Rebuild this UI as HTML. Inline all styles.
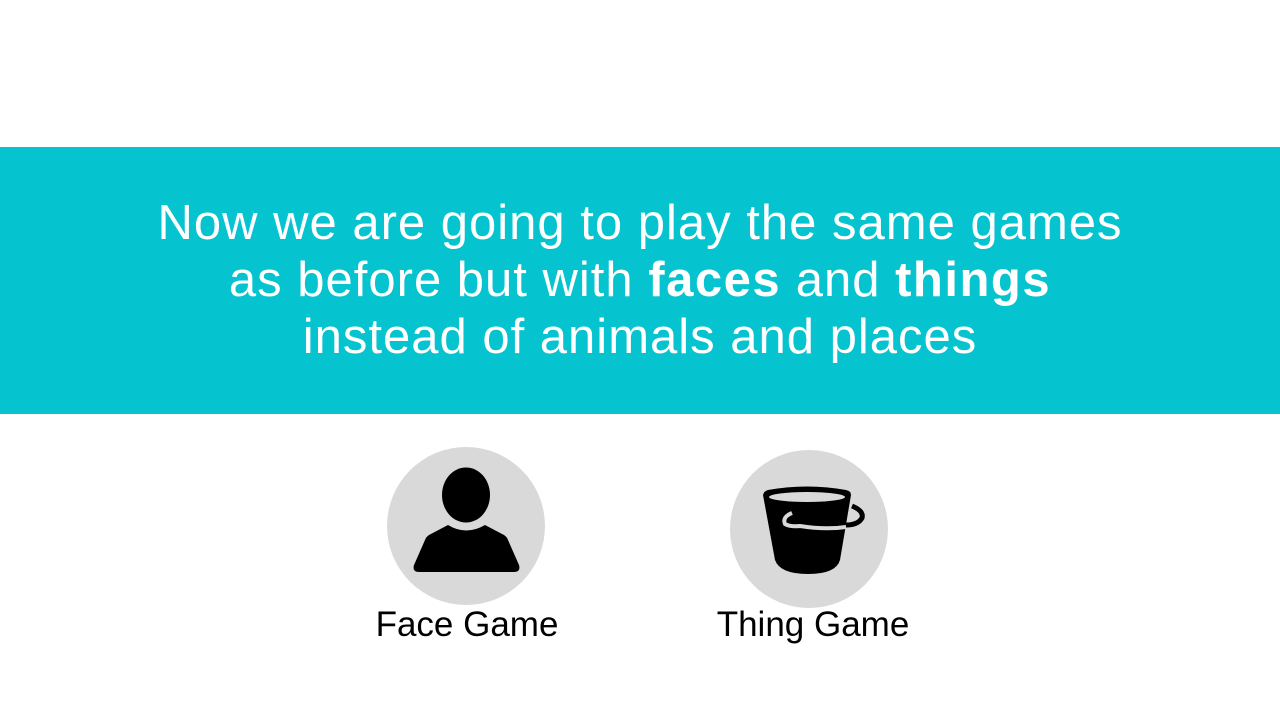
<!DOCTYPE html>
<html><head><style>
body{margin:0;width:1280px;height:720px;background:#fff;position:relative;overflow:hidden;font-family:"Liberation Sans",sans-serif}
.band{position:absolute;left:0;top:147px;width:1280px;height:267px;background:#05c3cf}
.t{position:absolute;left:0;width:1280px;top:195px;text-align:center;color:#fff;font-size:49px;line-height:57px;letter-spacing:1px}
.lbl{position:absolute;font-size:35px;color:#000;text-align:center;width:300px;top:605px}
</style></head><body>
<div class="band"></div>
<div class="t">Now we are going to play the same games<br>as before but with <b style="letter-spacing:1.5px">faces</b> and <b style="letter-spacing:1.5px">things</b><br>instead of animals and places</div>
<svg width="1280" height="720" style="position:absolute;left:0;top:0">
<circle cx="466" cy="526" r="79" fill="#d9d9d9"/>
<circle cx="809" cy="529" r="79" fill="#d9d9d9"/>
<ellipse cx="466" cy="495" rx="24" ry="27.5" fill="#000"/>
<path d="M448 525 Q466 536 485 525 L504 535 Q507 537 508 540 L519 565 Q521 572 514 572 L419 572 Q412 572 414 565 L425 540 Q426 537 429 535 Z" fill="#000"/>
<path d="M852 506 Q864 511 862 518 Q858 525 846 525" fill="none" stroke="#000" stroke-width="5"/>
<path d="M763 495 Q764 491 768 490 Q807 483 846 490 Q851 491 851 495 L840 560 Q836 574 808 574 Q780 574 775 560 Z" fill="#000"/>
<ellipse cx="807" cy="497" rx="38" ry="5" fill="#d9d9d9"/>
<path d="M792 513 Q782 517 785 524 Q790 527 800 526 Q825 530 846 527" fill="none" stroke="#d9d9d9" stroke-width="4"/>
<path d="M850 511 Q857 514 855 518 Q852 521 847 521" fill="none" stroke="#d9d9d9" stroke-width="3"/>
</svg>
<div class="lbl" style="left:317px">Face Game</div>
<div class="lbl" style="left:663px">Thing Game</div>
</body></html>
